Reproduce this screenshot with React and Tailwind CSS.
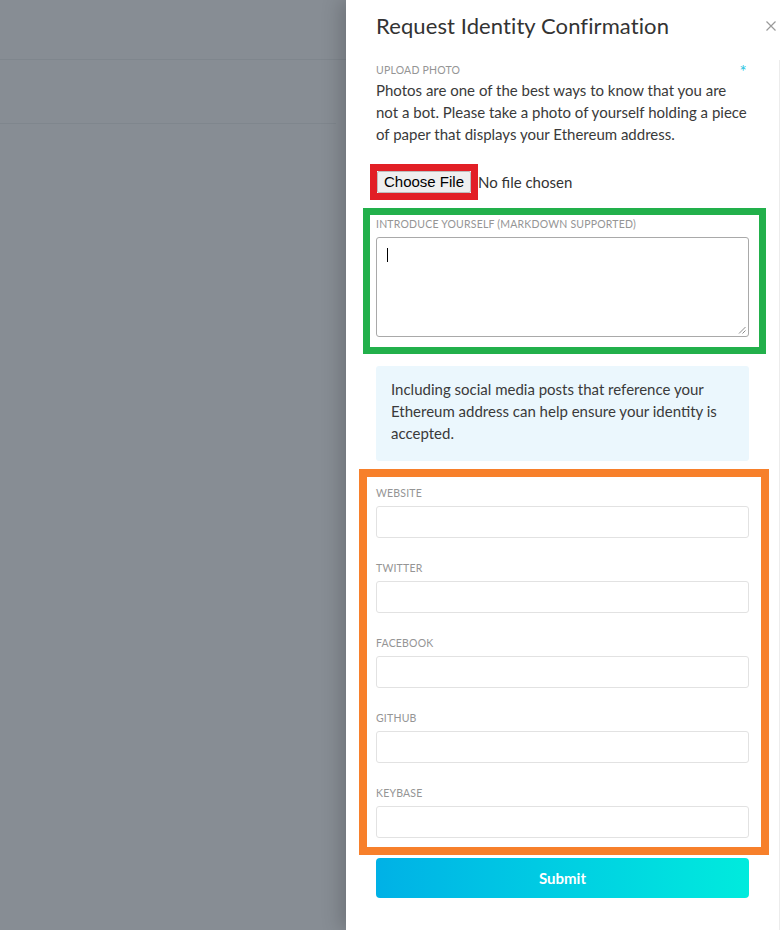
export default function App() {
  const fields = ["WEBSITE", "TWITTER", "FACEBOOK", "GITHUB", "KEYBASE"];
  const label = "leading-[14px] text-[10.5px] tracking-[0.2px] text-[#959595]";
  return (
    <div className="flex w-[782px] h-[930px] overflow-hidden font-['Lato',sans-serif]">
      {/* dimmed page behind */}
      <div className="w-[346px] h-full bg-[#878d94] flex flex-col">
        <div className="h-[60px] border-b border-[#7f868d]"></div>
        <div className="h-[64px] mr-[10px] border-b border-[#7f868d]"></div>
      </div>
      {/* side panel */}
      <div className="w-[436px] h-full bg-white flex flex-col shadow-[-6px_0_18px_rgba(0,0,0,0.18)]">
        <div className="h-[60px] flex items-start pl-[30px] pr-[6px] shrink-0">
          <h1 className="pt-[15px] text-[22px] leading-none text-[#333] tracking-[0.1px]">
            Request Identity Confirmation
          </h1>
          <svg className="ml-auto mt-[21px]" width="10" height="10" viewBox="0 0 10 10">
            <path d="M0.5 0.5 L9.5 9.5 M9.5 0.5 L0.5 9.5" stroke="#9a9a9a" strokeWidth="1.2" />
          </svg>
        </div>
        <div className="w-[434px] flex-1 border-r border-[#ececec] pl-[30px] pt-[3px]">
          <div className="w-[373px] flex flex-col">
            <div className={"flex justify-between h-[14px] " + label}>
              <span>UPLOAD PHOTO</span>
              <span className="h-[14px] text-[#2bc4e2] text-[17px] leading-[18px] pr-[2px]">*</span>
            </div>
            <p className="mt-[2px] text-[15px] leading-[22px] text-[#3a3a3a]">
              Photos are one of the best ways to know that you are not a bot. Please take a photo of yourself holding a piece of paper that displays your Ethereum address.
            </p>
            <div className="flex items-center mt-[19px]">
              <div className="ml-[-6px] border-[7px] border-[#e21f26]">
                <div className="h-[22px] w-[94px] flex items-center justify-center bg-[#efefef] border border-[#bdbdbd] rounded-[2px] font-['Liberation_Sans',sans-serif] text-[15px] text-black">
                  Choose File
                </div>
              </div>
              <span className="text-[15px] text-[#333]">No file chosen</span>
            </div>
            <div className="ml-[-13px] w-[403px] mt-[8px] border-[7px] border-[#22b04b] pt-[2px] pl-[6px] pr-[10px] pb-[10px]">
              <div className={label + " mb-[6px]"}>
                INTRODUCE YOURSELF (MARKDOWN SUPPORTED)
              </div>
              <div className="relative h-[100px] w-[373px] border border-[#a9a9a9] rounded-[3px] p-[10px]">
                <div className="w-px h-[14px] bg-black"></div>
                <svg className="absolute right-[2px] bottom-[2px]" width="8" height="8" viewBox="0 0 8 8">
                  <path d="M7.5 1 L1 7.5 M7.5 4.5 L4.5 7.5" stroke="#8a8a8a" strokeWidth="1" />
                </svg>
              </div>
            </div>
            <div className="mt-[12px] bg-[#ebf7fd] rounded-[3px] pt-[12px] pb-[17px] px-[15px] text-[15px] leading-[22px] text-[#3a3a3a]">
              Including social media posts that reference your Ethereum address can help ensure your identity is accepted.
            </div>
            <div className="mt-[8px] ml-[-17px] w-[410px] border-[8px] border-[#f7802b] pt-[9px] pl-[9px] pr-[12px] pb-[9px] flex flex-col gap-[23px]">
              {fields.map((f) => (
                <div key={f} className="flex flex-col">
                  <div className={label + " mb-[6px]"}>{f}</div>
                  <div className="h-[32px] w-[373px] border border-[#e2e2e2] rounded-[3px] bg-white"></div>
                </div>
              ))}
            </div>
            <div className="mt-[3px] h-[40px] rounded-[4px] bg-gradient-to-r from-[#00b1e6] to-[#00ebdd] flex items-center justify-center text-white font-bold text-[15px]">
              Submit
            </div>
          </div>
        </div>
      </div>
    </div>
  );
}
